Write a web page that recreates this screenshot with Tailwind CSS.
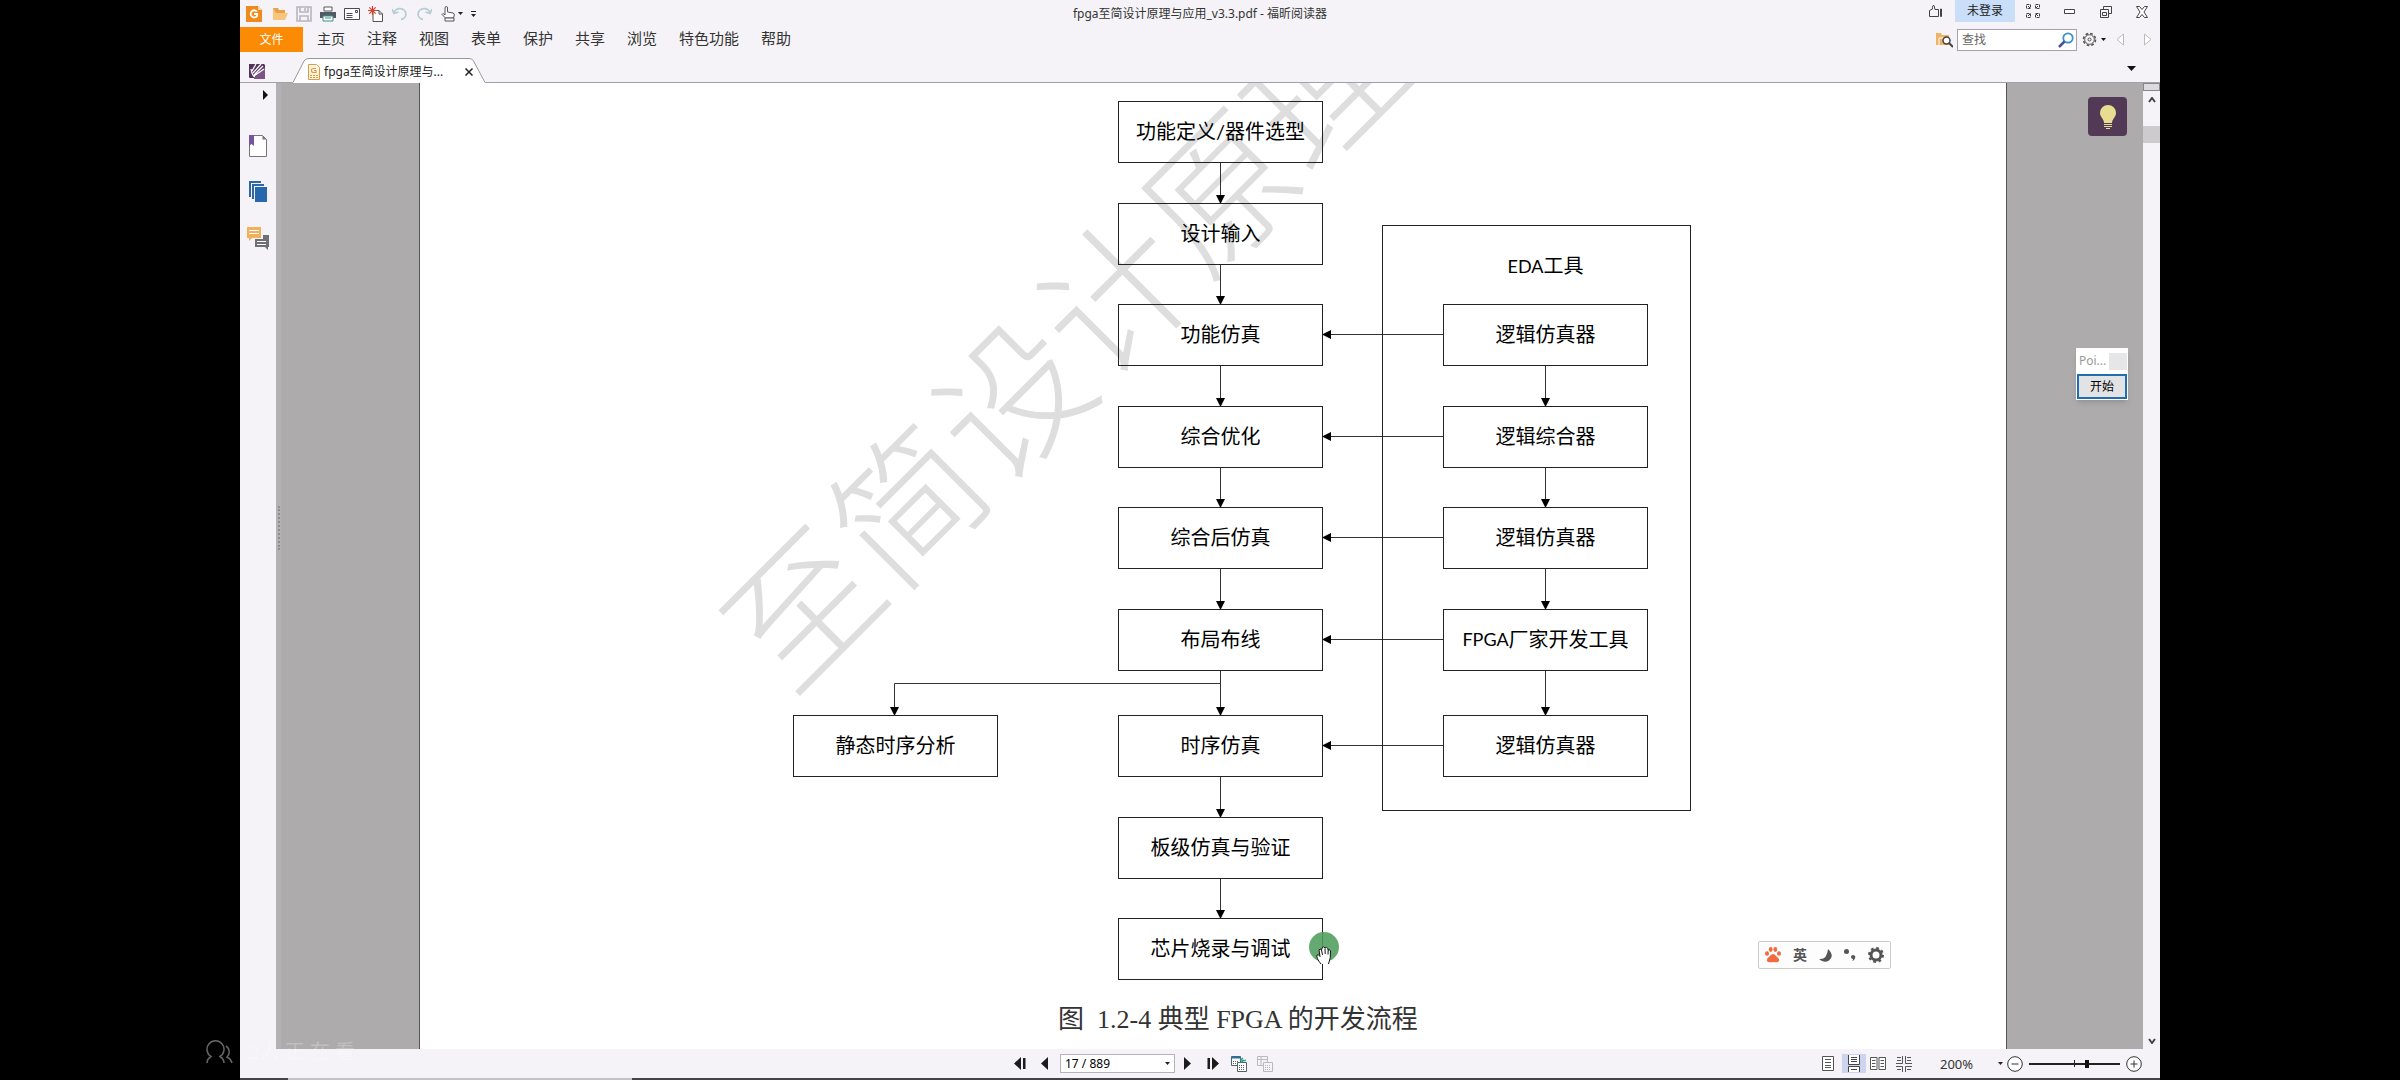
<!DOCTYPE html>
<html lang="zh-CN">
<head>
<meta charset="utf-8">
<title>fpga至简设计原理与应用_v3.3.pdf - 福昕阅读器</title>
<script src="https://cdn.jsdelivr.net/npm/@tailwindcss/browser@4"></script>
</head>
<body class="bg-black">
<div class="relative flex h-screen flex-col px-[10%] font-['Noto_Sans','Noto_Sans_CJK_SC',sans-serif] text-xs text-[#333]">

  <header class="shrink-0 bg-[#f5f3f7]">
    <!-- title bar -->
    <div class="relative flex h-[27px] items-center justify-between">
      <div class="flex items-center gap-2 pl-[6px]">
        <svg class="size-4" viewBox="0 0 16 16"><path d="M0 0h12l4 4v12H0z" fill="#f08a1d"/><path d="M12 0v4h4z" fill="#fcd9ad"/><path d="M11 5.5A3.6 3.6 0 1 0 11.2 10V8H8" fill="none" stroke="#fff" stroke-width="1.8"/></svg>
        <button aria-label="打开" class="ml-[2px]"><svg class="size-4" viewBox="0 0 16 16"><path d="M1 2h5l1 2h6v4H1z" fill="#e9a04c"/><path d="M1 14V2l3 5h12l-3 7z" fill="#f8c57c"/></svg></button>
        <button aria-label="保存"><svg class="size-4" viewBox="0 0 16 16" fill="none" stroke="#b9b5be" stroke-width="1.6"><path d="M1 1h14v14H1zM4 1v5h8V1M4 15v-5h8v5M9 2v3"/></svg></button>
        <button aria-label="打印"><svg class="size-4" viewBox="0 0 16 16"><path d="M4 1h8v4H4z" fill="#fff" stroke="#4f5a62"/><path d="M0 6h16v6H0z" fill="#4f5a62"/><path d="M3 10h10v5H3z" fill="#fff" stroke="#3f8f8a"/><path d="M5 12h6" stroke="#3f8f8a"/></svg></button>
        <button aria-label="邮件"><svg class="size-4" viewBox="0 0 16 16" fill="none" stroke="#4a4a50"><path d="M.5 2.500h15v11H.5z" fill="#fff"/><path d="M2.500 7.500h6M2.500 9.500h6M2.500 11.500h6M11.500 4.500h2v2h-2z"/></svg></button>
        <button aria-label="新建"><svg class="size-4" viewBox="0 0 16 16" fill="none"><path d="M5 4.500h6l3.500 3.500v7.500H5z" fill="#fff" stroke="#55555a"/><path d="M11 4.500V8h3.500" stroke="#55555a"/><path d="M4.500 0v9M0 4.500h9M1.300 1.300l6.400 6.400M7.700 1.300L1.300 7.700" stroke="#d8402c" stroke-width="1.200"/></svg></button>
        <button aria-label="撤销"><svg class="size-4" viewBox="0 0 16 16" fill="none" stroke="#b5cdd3" stroke-width="1.800"><path d="M2 7a6 5.500 0 1 1 7 6.500M0 3l2 4.500L6.500 6"/></svg></button>
        <button aria-label="重做"><svg class="size-4" viewBox="0 0 16 16" fill="none" stroke="#b5cdd3" stroke-width="1.800"><path d="M14 7a6 5.500 0 1 0-7 6.500M16 3l-2 4.500L9.500 6"/></svg></button>
        <button aria-label="手型工具" class="flex items-center gap-[2px]"><svg class="size-4" viewBox="0 0 16 16" fill="#fff" stroke="#55555a"><path d="M5 9V2q0-1.500 1.300-1.500T7.500 2v4l5.500 1q1.500.5 1.300 2l-.8 3H5.500L2 8.500Q2.500 7 4 8z"/><path d="M5 12v3h9v-3z"/></svg><svg class="h-[3px] w-[5px]" viewBox="0 0 5 3"><path d="M0 0h5L2.500 3z" fill="#222"/></svg></button>
        <button aria-label="自定义"><svg class="h-[6px] w-[5px]" viewBox="0 0 5 6"><path d="M0 0h5v1H0zM0 3h5L2.500 6z" fill="#222"/></svg></button>
      </div>
      <h1 class="pointer-events-none absolute inset-x-0 top-[6px] text-center text-xs leading-4">fpga至简设计原理与应用_v3.3.pdf - 福昕阅读器</h1>
      <div class="flex h-full items-start pr-[12px]">
        <button aria-label="触摸模式" class="mt-1 mr-[12px]"><svg class="size-[15px]" viewBox="0 0 15 15" fill="none" stroke="#444"><path d="M1.500 6.500v6h9v-7H7L6 1.500Q4 1 4.500 5zM12.500 5v7.500h1V5z"/></svg></button>
        <button class="h-[22px] w-[60px] bg-[#c9def8] text-[#222]">未登录</button>
        <button aria-label="全屏" class="mt-1 ml-[11px]"><svg class="size-[14px]" viewBox="0 0 14 14" fill="none" stroke="#444"><path d="M.5.500h4v4h-4zM9.500.500h4v4h-4zM.5 9.500h4v4h-4zM9.500 9.500h4v4h-4z" stroke-dasharray="3 1"/><path d="M2 2l2 2M12 2l-2 2M2 12l2-2M12 12l-2-2"/></svg></button>
        <button aria-label="最小化" class="mt-[9px] ml-[24px]"><svg class="h-[5px] w-[11px]" viewBox="0 0 11 5" fill="#fff" stroke="#444"><path d="M.5.500h10v4H.5z"/></svg></button>
        <button aria-label="还原" class="mt-[6px] ml-[25px]"><svg class="size-3" viewBox="0 0 12 12" fill="#f5f3f7" stroke="#444"><path d="M3.500.500h8v7h-8z"/><path d="M.5 3.500h8v8h-8zM2.500 6.500h4v3h-4z"/></svg></button>
        <button aria-label="关闭" class="mt-[6px] ml-[24px]"><svg class="size-3" viewBox="0 0 12 12" fill="#fff" stroke="#444"><path d="M.5.500h3L6 3.500 8.500.500h3L8 6l3.500 5.500h-3L6 8.500 3.500 11.500h-3L4 6z"/></svg></button>
      </div>
    </div>

    <!-- ribbon tabs -->
    <div class="flex h-[25px] items-center justify-between">
      <nav class="flex h-full items-start gap-[22px] text-[15px] leading-[23px]">
        <a href="#" class="-mr-[8px] flex h-full w-[63px] items-center justify-center bg-[#fb8a04] text-xs text-white">文件</a>
        <a href="#" class="text-[14px]">主页</a>
        <a href="#">注释</a>
        <a href="#">视图</a>
        <a href="#">表单</a>
        <a href="#">保护</a>
        <a href="#">共享</a>
        <a href="#">浏览</a>
        <a href="#">特色功能</a>
        <a href="#">帮助</a>
      </nav>
      <div class="flex items-center pr-[8px]">
        <button aria-label="高级搜索"><svg class="mr-1 size-[17px]" viewBox="0 0 17 17"><path d="M0 2h5l1 2h7v10H0z" fill="#f0b264"/><path d="M3 14V7h10" fill="none" stroke="#fff"/><circle cx="10.500" cy="9.500" r="3.500" fill="#fff" stroke="#444" stroke-width="1.500"/><path d="M13 12l4 4" stroke="#444" stroke-width="2"/></svg></button>
        <label class="flex h-[22px] w-[120px] items-center border border-[#a5a3a8] bg-white pl-1">
          <input type="text" aria-label="查找" placeholder="查找" class="min-w-0 flex-1 text-xs outline-none placeholder:text-[#666]">
          <svg class="mr-[2px] size-4" viewBox="0 0 16 16" fill="none"><circle cx="10" cy="6" r="4.700" stroke="#3a8fc4" stroke-width="1.800"/><path d="M6.500 9.500L1 15" stroke="#45519c" stroke-width="2.500"/></svg>
        </label>
        <button aria-label="设置" class="ml-[5px] flex items-center gap-1"><svg class="size-[15px]" viewBox="0 0 15 15" fill="none" stroke="#555"><circle cx="7.500" cy="7.500" r="6" stroke-width="1.600" stroke-dasharray="2.700 2"/><circle cx="7.500" cy="7.500" r="4.800"/><circle cx="7.500" cy="7.500" r="1.500"/></svg><svg class="h-[3px] w-[5px]" viewBox="0 0 5 3"><path d="M0 0h5L2.500 3z" fill="#111"/></svg></button>
        <button aria-label="上一个" class="ml-[10px]"><svg class="h-[13px] w-2" viewBox="0 0 8 13" fill="#fff" stroke="#bbb"><path d="M7.500 1v11L1 6.500z"/></svg></button>
        <button aria-label="下一个" class="ml-[20px]"><svg class="h-[13px] w-2" viewBox="0 0 8 13" fill="#fff" stroke="#bbb"><path d="M.5 1v11L7 6.500z"/></svg></button>
      </div>
    </div>

    <!-- document tabs -->
    <div class="flex h-[31px] items-end border-b border-[#a3a1a5]">
      <button aria-label="签名" class="mb-[3px] ml-[9px]"><svg class="size-4" viewBox="0 0 16 16"><path d="M1 1h14l1 1v13H1q-1 0-1-1V1z" fill="#56305f"/><path d="M5 15L16 4v12H5z" fill="#7b5584"/><path d="M3 8l4-7M4 10l8-9M5 12l9-9M5 13l10-7M2 6q1 7 4 8" stroke="#fff" stroke-width="1.300" fill="none"/></svg></button>
      <div class="relative -mb-px ml-[28px] h-[25px] w-[192px]">
        <svg class="absolute inset-0 size-full" viewBox="0 0 192 25" preserveAspectRatio="none"><path d="M0 24.500L11 3Q12.500.5 16 .5H176Q179.500.5 180.500 3L192 24.500V25H0z" fill="#fff"/><path d="M0 24.500L11 3Q12.500.5 16 .5H176Q179.500.5 180.500 3L192 24.500" fill="none" stroke="#98969b"/></svg>
        <div class="relative flex h-full items-center pt-[3px] pl-[15px]">
          <svg class="mr-1 h-4 w-3" viewBox="0 0 12 16" fill="none" stroke="#e6983c"><path d="M.5.500h8l3 3v12H.5z" fill="#fff6e8"/><path d="M8 4.500H5.500q-2 0-2 2t2 2H8v-2H6" stroke-width="1.200"/><path d="M2 11.500h8M2 13.500h8" stroke-dasharray="2 1"/></svg>
          <a href="#" class="w-[141px] text-[#222]">fpga至简设计原理与...</a>
          <button aria-label="关闭标签"><svg class="size-2" viewBox="0 0 8 8" stroke="#222" stroke-width="1.500"><path d="M.5.500l7 7M7.500.500l-7 7"/></svg></button>
        </div>
      </div>
      <button aria-label="标签列表" class="mr-6 mb-[11px] ml-auto"><svg class="h-[5px] w-[9px]" viewBox="0 0 9 5"><path d="M0 0h9L4.500 5z" fill="#111"/></svg></button>
    </div>
  </header>

  <main class="flex min-h-0 flex-1 bg-[#adabac]">
    <!-- navigation panel -->
    <aside class="flex w-9 shrink-0 flex-col items-center bg-[#f5f3f7]">
      <button aria-label="展开" class="mt-[7px] mr-2 self-end"><svg class="h-[10px] w-[5px]" viewBox="0 0 5 10"><path d="M0 0l5 5-5 5z" fill="#111"/></svg></button>
      <button aria-label="书签" class="mt-[35px]"><svg class="h-[22px] w-[18px]" viewBox="0 0 18 22"><path d="M.5.500h13l4 4v17H.5z" fill="#fff" stroke="#77757a"/><path d="M13.500.500v4h4z" fill="#77757a"/><path d="M0 0h5v11L2.500 9 0 11z" fill="#76569a"/></svg></button>
      <button aria-label="页面" class="mt-6"><svg class="h-[22px] w-[18px]" viewBox="0 0 18 22"><path d="M1 16V1h11M4 18V4h11" fill="none" stroke="#2a68a8" stroke-width="2"/><path d="M6 6h12v15H6z" fill="#2768ad"/></svg></button>
      <button aria-label="注释" class="mt-6"><svg class="h-[23px] w-[22px]" viewBox="0 0 22 23"><path d="M0 0h14v11H5l-3 3v-3H0z" fill="#f3b05c"/><path d="M2 3.500h10M2 6.500h10" stroke="#fff"/><path d="M16 8h6v12h-1v3l-3-3H8v-8h8z" fill="#707074"/><path d="M10 14.500h9M10 17.500h9" stroke="#fff"/></svg></button>
    </aside>
    <div class="flex w-[5px] shrink-0 items-center justify-center bg-[#b3b1b3]">
      <span class="-mt-[76px] h-11 border-l-2 border-dotted border-[#8f8d90]"></span>
    </div>

    <!-- page -->
    <article id="page" class="relative ml-[138px] min-w-0 flex-1 overflow-hidden border-x border-[#555] bg-white">
      <section class="relative ml-[373px] h-[902px] w-[898px]" aria-label="FPGA 开发流程图">
        <p class="absolute top-[451px] left-[-64px] w-[900px] origin-[73px_73px] -rotate-45 text-[147px] leading-[147px] font-light whitespace-nowrap text-[#dedede]">至简设计原理</p>

        <svg class="absolute inset-0 size-full" viewBox="0 0 898 902" fill="none" stroke="#333">
          <defs><marker id="arrow" markerUnits="userSpaceOnUse" markerWidth="9" markerHeight="9" refX="8" refY="4.500" orient="auto"><path d="M0 0L9 4.500 0 9z" fill="#000" stroke="none"/></marker></defs>
          <g marker-end="url(#arrow)">
            <path d="M427.500 80v40"/><path d="M427.500 182v39"/><path d="M427.500 283v40"/><path d="M427.500 385v39"/><path d="M427.500 486v40"/><path d="M427.500 588v44"/><path d="M427.500 694v40"/><path d="M427.500 796v39"/>
            <path d="M427.500 600.500H101.500V632"/>
            <path d="M752.500 283v40"/><path d="M752.500 385v39"/><path d="M752.500 486v40"/><path d="M752.500 588v44"/>
            <path d="M650 251.500H530"/><path d="M650 353.500H530"/><path d="M650 454.500H530"/><path d="M650 556.500H530"/><path d="M650 662.500H530"/>
          </g>
        </svg>

        <div class="absolute top-[142px] left-[589px] h-[586px] w-[309px] border border-[#222]"></div>
        <p class="absolute top-[168px] left-[650px] w-[205px] text-center font-['Lato','Noto_Sans_CJK_SC',sans-serif] text-lg text-black">EDA<span class="text-xl leading-7">工具</span></p>
        <div class="font-['Lato','Noto_Sans_CJK_SC',sans-serif] text-xl text-black *:absolute *:flex *:h-[62px] *:w-[205px] *:items-center *:justify-center *:border *:border-[#222] *:pb-[2px]">
          <div class="top-[18px] left-[325px]">功能定义/器件选型</div>
          <div class="top-[120px] left-[325px]">设计输入</div>
          <div class="top-[221px] left-[325px]">功能仿真</div>
          <div class="top-[323px] left-[325px]">综合优化</div>
          <div class="top-[424px] left-[325px]">综合后仿真</div>
          <div class="top-[526px] left-[325px]">布局布线</div>
          <div class="top-[632px] left-[325px]">时序仿真</div>
          <div class="top-[734px] left-[325px]">板级仿真与验证</div>
          <div class="top-[835px] left-[325px]">芯片烧录与调试</div>
          <div class="top-[632px] left-0">静态时序分析</div>
          <div class="top-[221px] left-[650px]">逻辑仿真器</div>
          <div class="top-[323px] left-[650px]">逻辑综合器</div>
          <div class="top-[424px] left-[650px]">逻辑仿真器</div>
          <div class="top-[526px] left-[650px]"><span class="text-lg">FPGA</span>厂家开发工具</div>
          <div class="top-[632px] left-[650px]">逻辑仿真器</div>
        </div>

        <!-- hand cursor -->
        <svg class="absolute top-[849px] left-[516px] h-[40px] w-[30px]" viewBox="0 0 30 40"><circle cx="15" cy="15" r="15" fill="#4f9d5c" fill-opacity=".88"/><path d="M12 32q-5-6-4-9 1-1.500 3 1.500l-1-6.500q1-2 2.500 0l.8-2.500q1.500-1.500 2.700.5 1.500-1.500 2.800.5l.4 1.500q1.700-1 2.300 1 .5 7-2 13z" fill="#fff"/><path d="M12 32q-5-6-4-9 1-1.500 3 1.500l-1-6.500q1-2 2.500 0l.8-2.500q1.500-1.500 2.700.5 1.500-1.500 2.800.5l.4 1.500q1.700-1 2.300 1 .5 7-2 13M12.500 18l1 5M16 16.500l.2 5.500M19.200 17.500l-.2 5" fill="none" stroke="#111"/></svg>
      </section>
      <p class="pl-[638px] font-['Liberation_Serif','Noto_Sans_CJK_SC',serif] text-[26px] leading-[70px] whitespace-pre">图  1.2-4 典型 FPGA 的开发流程</p>

      <!-- input method bar -->
      <div class="absolute right-[115px] bottom-[80px] flex h-7 w-[133px] items-center justify-between rounded-xs border border-[#ccc] bg-[#fdfdfd] px-[6px] text-[#555]">
        <svg class="size-4" viewBox="0 0 16 16" fill="#f26b3f"><ellipse cx="2" cy="6.500" rx="2" ry="2.300"/><ellipse cx="5.700" cy="2.500" rx="1.900" ry="2.400"/><ellipse cx="10.300" cy="2.500" rx="1.900" ry="2.400"/><ellipse cx="14" cy="6.500" rx="2" ry="2.300"/><path d="M8 7q2 0 3.500 2.500Q15 12 14 14t-6 1q-5 1-6-1t2.500-4.500Q6 7 8 7z"/></svg>
        <button class="text-[14px] font-bold">英</button>
        <button aria-label="半角"><svg class="size-[13px]" viewBox="0 0 13 13" fill="#555"><path d="M9 0q7 7 1 11.500Q5 14.500 0 10q8 1 9-10z"/></svg></button>
        <button aria-label="标点"><svg class="size-3" viewBox="0 0 12 12" fill="#555"><circle cx="2.500" cy="2.500" r="2.500"/><path d="M7.500 6.500q1.500-1 3 0t.5 3Q10 11.500 8 12q1-1 1-2-3-1-1.500-3.500z"/></svg></button>
        <button aria-label="输入法设置"><svg class="size-4" viewBox="0 0 16 16" fill="none" stroke="#555"><circle cx="8" cy="8" r="5" stroke-width="3"/><circle cx="8" cy="8" r="7" stroke-width="2" stroke-dasharray="2.750 2.750"/></svg></button>
      </div>
    </article>
    <div class="w-[136px] shrink-0"></div>

    <!-- scroll bar -->
    <div class="flex w-[17px] shrink-0 flex-col items-center bg-[#f5f3f7]" role="scrollbar" aria-controls="page" aria-valuenow="2">
      <span class="h-2 w-full border border-[#88868a] bg-[#dcdadd]"></span>
      <svg class="mt-[6px] h-[6px] w-2" viewBox="0 0 8 6" fill="none" stroke="#444" stroke-width="2"><path d="M1 5l3-4 3 4"/></svg>
      <span class="mt-[23px] h-[17px] w-full bg-[#cdcbce]"></span>
      <svg class="mt-auto mb-[5px] h-[6px] w-2" viewBox="0 0 8 6" fill="none" stroke="#444" stroke-width="2"><path d="M1 1l3 4 3-4"/></svg>
    </div>
  </main>

  <footer class="flex h-[29px] shrink-0 items-center justify-between bg-[#f5f3f7] pl-[774px]">
    <div class="flex items-center">
      <button aria-label="首页"><svg class="h-[13px] w-3" viewBox="0 0 12 13" fill="#1c1c1c"><path d="M7 0v13L0 6.500zM9 1h2.500v11H9z"/></svg></button>
      <button aria-label="上一页" class="ml-[15px]"><svg class="h-[13px] w-[7px]" viewBox="0 0 7 13" fill="#1c1c1c"><path d="M7 0v13L0 6.500z"/></svg></button>
      <label class="relative ml-3 flex items-center">
        <select aria-label="页码" class="h-[19px] w-[115px] appearance-none border border-[#b5b3b8] bg-white pl-1 text-xs leading-4 text-black"><option>17 / 889</option></select>
        <svg class="pointer-events-none absolute right-[5px] h-[3px] w-[5px]" viewBox="0 0 5 3"><path d="M0 0h5L2.500 3z" fill="#222"/></svg>
      </label>
      <button aria-label="下一页" class="ml-[9px]"><svg class="h-[13px] w-[7px]" viewBox="0 0 7 13" fill="#1c1c1c"><path d="M0 0v13l7-6.500z"/></svg></button>
      <button aria-label="末页" class="ml-4"><svg class="h-[13px] w-3" viewBox="0 0 12 13" fill="#1c1c1c"><path d="M5 0v13l7-6.500zM.5 1H3v11H.5z"/></svg></button>
      <button aria-label="后退" class="ml-3"><svg class="size-4" viewBox="0 0 16 16" fill="#fff" stroke="#55606a"><path d="M.5.500h9v9h-9z"/><path d="M.5 1.500h9" stroke="#2c6f9e" stroke-width="2"/><path d="M2 5.500h5M2 7.500h5" stroke-dasharray="1 1"/><path d="M6.500 6.500h9v9h-9z"/><path d="M8 9.500h6M8 11.500h6M8 13.500h6" stroke-dasharray="1 1"/><path d="M15 4.500H10M12 2l-2.500 2L12 6" stroke="#2ca08c" stroke-width="1.500"/></svg></button>
      <button aria-label="前进" class="ml-[10px]"><svg class="size-4" viewBox="0 0 16 16" fill="#f5f3f7" stroke="#bbb9bd"><path d="M.5.500h10v9H.5zM.5 3.500h10M4 1v8"/><path d="M6.500 6.500h9v9h-9z"/><path d="M8 9.500h6M8 11.500h6M8 13.500h6" stroke-dasharray="1 1"/></svg></button>
    </div>
    <div class="flex items-center pr-[18px]">
      <button aria-label="单页"><svg class="h-[15px] w-3" viewBox="0 0 12 15" fill="#fff" stroke="#555"><path d="M.5.500h11v14H.5zM3 3.500h6M3 6.500h6M3 9.500h6M3 11.500h6"/></svg></button>
      <button aria-label="连续" class="ml-2 flex h-[19px] w-6 items-center justify-center bg-[#ccd4f0]"><svg class="h-[17px] w-3" viewBox="0 0 12 17" fill="#fff" stroke="#444"><path d="M.5 0v9.500h11V0M3 2.500h6M3 4.500h6M3 6.500h6M.5 17v-5.500h11V17M3 14.500h6"/></svg></button>
      <button aria-label="双页" class="ml-1"><svg class="h-[13px] w-4" viewBox="0 0 16 13" fill="#fff" stroke="#555"><path d="M.5.500h6.500v12H.5zM9 .5h6.500v12H9zM2 3.500h3.500M2 6.500h3.500M2 9.500h3.500M10.500 3.500H14M10.500 6.500H14M10.500 9.500H14"/></svg></button>
      <button aria-label="连续双页" class="ml-[10px]"><svg class="h-4 w-4" viewBox="0 0 16 16" fill="none" stroke="#555"><path d="M6.500 0v7.500H0M9.500 0v7.500H16M6.500 16v-5.500H0M9.500 16v-5.500H16M1 1.500h4M1 4.500h4M11 1.500h4M11 4.500h4M1 13.500h4M11 13.500h4"/></svg></button>
      <label class="relative ml-[27px] flex items-center">
        <select aria-label="缩放" class="w-[64px] appearance-none pl-px text-[13px] leading-4"><option>200%</option></select>
        <svg class="pointer-events-none absolute right-0 h-[3px] w-[5px]" viewBox="0 0 5 3"><path d="M0 0h5L2.500 3z" fill="#222"/></svg>
      </label>
      <button aria-label="缩小" class="ml-1"><svg class="size-4" viewBox="0 0 16 16" fill="#fff" stroke="#333"><circle cx="8" cy="8" r="7.300"/><path d="M4.500 8h7"/></svg></button>
      <div class="relative mx-[6px] flex w-[91px] items-center">
        <span class="absolute left-[45px] h-[7px] w-px bg-[#222]"></span>
        <input type="range" aria-label="缩放比例" min="0" max="100" value="64" class="h-[2px] w-full appearance-none bg-[#222] [&::-webkit-slider-thumb]:h-2 [&::-webkit-slider-thumb]:w-1 [&::-webkit-slider-thumb]:appearance-none [&::-webkit-slider-thumb]:bg-[#111]">
      </div>
      <button aria-label="放大"><svg class="size-4" viewBox="0 0 16 16" fill="#fff" stroke="#333"><circle cx="8" cy="8" r="7.300"/><path d="M4.500 8h7M8 4.500v7"/></svg></button>
    </div>
  </footer>
  <div class="flex h-[2px] shrink-0 bg-[#454248]"><span class="ml-12 w-[344px] bg-[#c3c1c5]"></span></div>

  <!-- floating widgets -->
  <button aria-label="提示" class="absolute top-[97px] right-[273px] flex size-[39px] items-center justify-center rounded-sm bg-[#523a56]"><svg class="h-6 w-4" viewBox="0 0 16 24"><path d="M8 0a8 8 0 0 1 8 8c0 4-4 6-4 10H4C4 14 0 12 0 8a8 8 0 0 1 8-8z" fill="#e8dc92"/><path d="M4 19.500h8M4 21.500h8M6 23.500h4" stroke="#e8dc92" stroke-width="1.200"/></svg></button>
  <div class="absolute top-[348px] right-[272px] flex h-[52px] w-[52px] flex-col bg-white shadow-md">
    <div class="flex h-[26px] items-center justify-between pr-px pl-[3px] text-[#999]">Poi...<span class="h-[17px] w-[18px] bg-[#e6e5e7]"></span></div>
    <button class="m-px mt-0 flex-1 border-2 border-[#1f6fae] bg-[#e3e3e5] text-xs text-black">开始</button>
  </div>
  <div class="absolute bottom-[14px] left-[206px] flex items-center gap-[15px]">
    <svg class="h-6 w-[27px]" viewBox="0 0 27 24" fill="none" stroke="#666" stroke-width="1.500"><path d="M1 23q0-4 4-6.500A8.500 8.500 0 1 1 14 16.500q4 2.500 4 6.500M20 6a7 7 0 0 1 1 11q4 2 5 6"/></svg>
    <span class="text-xl text-white/25">2人 正 在 看</span>
  </div>
</div>
</body>
</html>
